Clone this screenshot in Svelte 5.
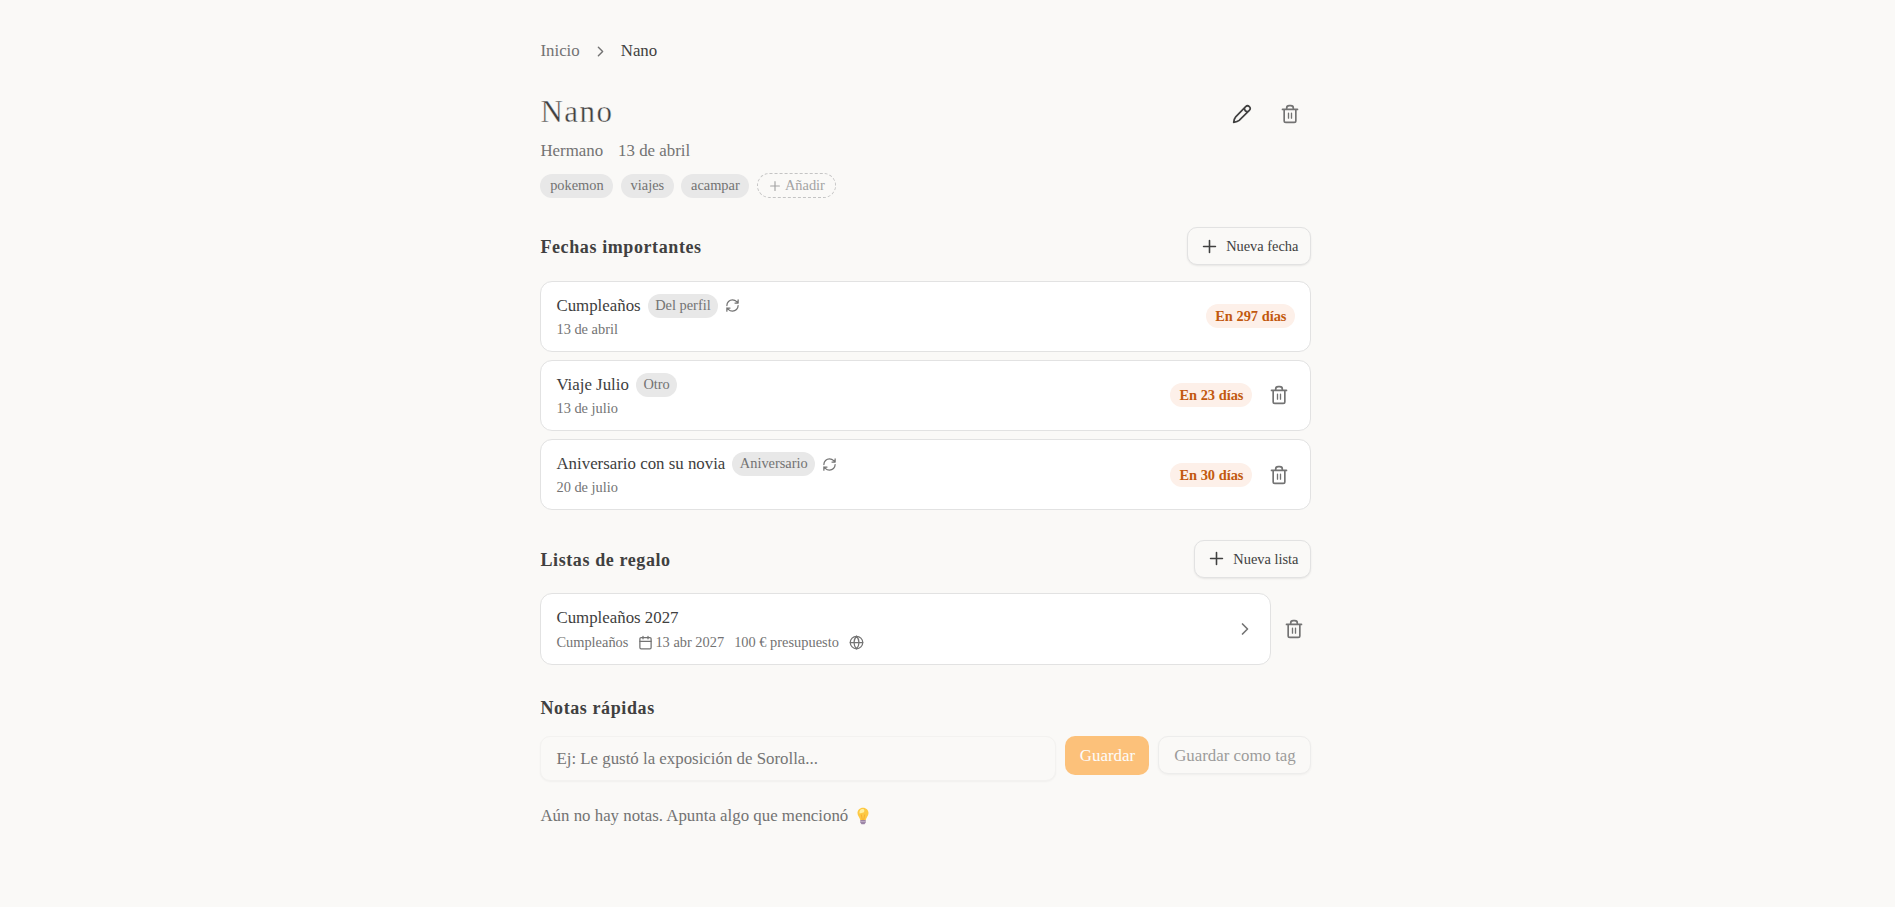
<script lang="ts">
	interface ImportantDate {
		name: string;
		kind: string;
		date: string;
		days: number;
		repeats: boolean;
		removable: boolean;
	}

	const tags = ['pokemon', 'viajes', 'acampar'];

	const dates: ImportantDate[] = [
		{
			name: 'Cumpleaños',
			kind: 'Del perfil',
			date: '13 de abril',
			days: 297,
			repeats: true,
			removable: false
		},
		{
			name: 'Viaje Julio',
			kind: 'Otro',
			date: '13 de julio',
			days: 23,
			repeats: false,
			removable: true
		},
		{
			name: 'Aniversario con su novia',
			kind: 'Aniversario',
			date: '20 de julio',
			days: 30,
			repeats: true,
			removable: true
		}
	];

	let note = $state('');
</script>

{#snippet trash()}
	<svg class="icon" viewBox="0 0 24 24" width="20" height="20">
		<path d="M3 6.5h18M19 6.5V20a2 2 0 0 1-2 2H7a2 2 0 0 1-2-2V6.5M8 6V5a3 3 0 0 1 3-3h2a3 3 0 0 1 3 3v1" />
		<path class="thin" d="M10.2 11v6M13.8 11v6" />
	</svg>
{/snippet}

{#snippet plus(size: number)}
	<svg class="icon" viewBox="0 0 24 24" width={size} height={size}>
		<path d="M4.5 12h15M12 4.5v15" />
	</svg>
{/snippet}

{#snippet chevron(size: number)}
	<svg class="icon" viewBox="0 0 24 24" width={size} height={size}>
		<path d="m9 18 6-6-6-6" />
	</svg>
{/snippet}

<main class="page">
	<nav class="breadcrumb">
		<a href="#inicio">Inicio</a>
		{@render chevron(17)}
		<span>Nano</span>
	</nav>

	<header class="profile">
		<div class="title">
			<h1>Nano</h1>
			<div class="actions">
				<button class="icon-button dark" aria-label="Editar">
					<svg class="icon" viewBox="0 0 24 24" width="20" height="20">
						<path d="M16.4 3.2a3.1 3.1 0 0 1 4.4 4.4L8.6 19.6c-1.3 1.2-4 2-6.6 2.4.4-2.6 1.2-5.3 2.4-6.6zM15 5c0 2.5 1.5 4 4 4" />
					</svg>
				</button>
				<button class="icon-button" aria-label="Eliminar">{@render trash()}</button>
			</div>
		</div>
		<p class="meta"><span>Hermano</span><span>13 de abril</span></p>
		<div class="tags">
			{#each tags as tag}
				<span class="tag">{tag}</span>
			{/each}
			<button class="tag add">{@render plus(14)}Añadir</button>
		</div>
	</header>

	<section class="dates">
		<div class="section-head">
			<h2>Fechas importantes</h2>
			<button class="outline new">{@render plus(19)}Nueva fecha</button>
		</div>
		<ul>
			{#each dates as item}
				<li class="card">
					<div class="info">
						<div class="name">
							<span>{item.name}</span>
							<span class="kind">{item.kind}</span>
							{#if item.repeats}
								<svg class="icon" viewBox="0 0 24 24" width="15" height="15">
									<path d="M3 12a9 9 0 0 1 9-9 9.75 9.75 0 0 1 6.74 2.74L21 8M21 3v5h-5M21 12a9 9 0 0 1-9 9 9.75 9.75 0 0 1-6.74-2.74L3 16M8 16H3v5" />
								</svg>
							{/if}
						</div>
						<p class="small">{item.date}</p>
					</div>
					<span class="days">En {item.days} días</span>
					{#if item.removable}
						<button class="icon-button" aria-label="Eliminar fecha">{@render trash()}</button>
					{/if}
				</li>
			{/each}
		</ul>
	</section>

	<section class="lists">
		<div class="section-head">
			<h2>Listas de regalo</h2>
			<button class="outline new">{@render plus(19)}Nueva lista</button>
		</div>
		<div class="list-row">
			<a class="card" href="#lista">
				<div class="info">
					<div class="name">Cumpleaños 2027</div>
					<div class="small details">
						<span>Cumpleaños</span>
						<span class="when">
							<svg class="icon" viewBox="0 0 24 24" width="15" height="15">
								<rect x="3" y="4" width="18" height="18" rx="2" />
								<path d="M8 2v4M16 2v4M3 10h18" />
							</svg>
							13 abr 2027
						</span>
						<span>100 € presupuesto</span>
						<svg class="icon" viewBox="0 0 24 24" width="15" height="15">
							<circle cx="12" cy="12" r="10" />
							<path d="M12 2a14.5 14.5 0 0 0 0 20 14.5 14.5 0 0 0 0-20M2 12h20" />
						</svg>
					</div>
				</div>
				{@render chevron(20)}
			</a>
			<button class="icon-button" aria-label="Eliminar lista">{@render trash()}</button>
		</div>
	</section>

	<section class="notes">
		<h2>Notas rápidas</h2>
		<form>
			<input bind:value={note} placeholder="Ej: Le gustó la exposición de Sorolla..." />
			<button class="primary" disabled={!note}>Guardar</button>
			<button class="outline" disabled={!note}>Guardar como tag</button>
		</form>
		<p class="empty">
			Aún no hay notas. Apunta algo que mencionó
			<svg class="bulb" viewBox="0 0 12 18" width="12" height="18">
				<path d="M6 .7C2.8.7.5 3 .5 6c0 3 2.2 4.2 2.8 7.2h5.4C9.3 10.2 11.5 9 11.5 6c0-3-2.3-5.3-5.5-5.3z" fill="#fdc943" />
				<path d="M2.5 6.5C2 4 3.5 2 5.5 2 7.5 2 8 4 6.5 5.5z" fill="#fff0a0" />
				<path d="M4.3 7.5 5.3 13M7.7 7.5 6.7 13" stroke="#f6a52c" stroke-width=".7" />
				<path d="M3.3 13h5.4v2.5L7.5 17.3h-3l-1.2-1.8z" fill="#9a83a5" />
				<path d="M3.3 14.6h5.4" stroke="#c6b5cc" stroke-width=".8" />
			</svg>
		</p>
	</section>
</main>

<style>
	:global(body) {
		background: #faf9f7;
	}

	.page {
		width: 771px;
		margin-left: 540.45px;
		padding-top: 39px;
		font-family: 'Liberation Serif', 'Times New Roman', serif;
		font-size: 16.85px;
		line-height: 24px;
		color: #404040;
	}

	.page *,
	.page {
		box-sizing: border-box;
	}

	h1,
	h2,
	p,
	ul {
		margin: 0;
		padding: 0;
	}

	button,
	input {
		font: inherit;
		color: inherit;
	}

	a {
		color: inherit;
		text-decoration: none;
	}

	.icon {
		display: block;
		flex: none;
		fill: none;
		stroke: currentColor;
		stroke-width: 2;
		stroke-linecap: round;
		stroke-linejoin: round;
	}

	.thin {
		stroke-width: 1.6;
	}

	.breadcrumb {
		display: flex;
		align-items: center;
		gap: 12px;
		height: 24px;
		color: #737373;
	}

	.breadcrumb span {
		color: #404040;
	}

	.title {
		display: flex;
		align-items: center;
		justify-content: space-between;
		height: 43px;
		margin-top: 29px;
	}

	h1 {
		padding-bottom: 4px;
		font-size: 31px;
		font-weight: 300;
		line-height: 38px;
		letter-spacing: 1.5px;
		-webkit-text-stroke: 0.4px #faf9f7;
	}

	.actions {
		display: flex;
		gap: 5px;
	}

	.icon-button {
		display: flex;
		align-items: center;
		justify-content: center;
		width: 43px;
		height: 43px;
		padding: 0;
		border: 0;
		background: none;
		color: #737373;
	}

	.dark {
		color: #404040;
	}

	.meta {
		display: flex;
		gap: 15px;
		margin-top: 3.5px;
		color: #737373;
	}

	.tags {
		display: flex;
		align-items: center;
		gap: 7.5px;
		height: 25px;
		margin-top: 10.5px;
	}

	.tag {
		height: 24px;
		padding: 0 9.7px;
		border-radius: 12px;
		background: #e8e8e8;
		color: #737373;
		font-size: 14.4px;
		line-height: 23px;
	}

	.add {
		display: flex;
		align-items: center;
		gap: 3px;
		height: 25px;
		padding: 0 10px;
		border: 1px dashed #c4c4c4;
		border-radius: 13px;
		background: none;
		color: #a3a3a3;
	}

	.section-head {
		display: flex;
		align-items: center;
		justify-content: space-between;
		height: 38px;
	}

	h2 {
		padding-top: 2px;
		font-size: 18px;
		font-weight: 700;
		line-height: 26px;
		letter-spacing: 0.6px;
	}

	.outline {
		display: flex;
		align-items: center;
		justify-content: center;
		height: 38px;
		border: 1px solid #e2e2e2;
		border-radius: 10px;
		background: #faf9f7;
		box-shadow: 0 1px 2px rgb(0 0 0 / 8%);
	}

	.new {
		gap: 7px;
		padding: 0 12px;
		font-size: 14.4px;
	}

	.dates {
		margin-top: 29px;
	}

	.dates ul {
		display: flex;
		flex-direction: column;
		gap: 8px;
		margin-top: 15.5px;
		list-style: none;
	}

	.card {
		display: flex;
		align-items: center;
		height: 71.3px;
		padding: 0 15px;
		border: 1px solid #e2e2e2;
		border-radius: 12px;
		background: #fff;
	}

	.info {
		flex: 1;
		padding-top: 2px;
	}

	.name {
		display: flex;
		align-items: center;
		gap: 7px;
		height: 24px;
	}

	.name .icon {
		color: #737373;
	}

	.kind {
		height: 24px;
		padding: 0 7.5px;
		border-radius: 12px;
		background: #e8e8e8;
		color: #737373;
		font-size: 14.4px;
		line-height: 23px;
	}

	.small {
		font-size: 14.4px;
		line-height: 23px;
		color: #737373;
	}

	.days {
		height: 24px;
		padding: 0 9px;
		border-radius: 12px;
		background: #fdf0e9;
		color: #c2590f;
		font-size: 14.4px;
		font-weight: 700;
	}

	.card .icon-button {
		margin: 0 -5px 0 5px;
	}

	.lists {
		margin-top: 29.5px;
	}

	.list-row {
		display: flex;
		align-items: center;
		justify-content: space-between;
		margin-top: 15.5px;
	}

	.list-row .card {
		width: 731px;
	}

	.list-row > .icon-button {
		width: 34px;
	}

	.card > .icon {
		color: #737373;
	}

	.details {
		display: flex;
		align-items: center;
		gap: 10px;
		height: 25px;
	}

	.when {
		display: flex;
		align-items: center;
		gap: 2px;
	}

	.notes {
		margin-top: 28.5px;
	}

	.notes form {
		display: flex;
		align-items: flex-start;
		gap: 9px;
		margin-top: 15px;
	}

	input {
		flex: 1;
		min-width: 0;
		height: 45px;
		padding: 1px 15px 0;
		border: 1px solid #f3f2f0;
		border-radius: 10px;
		background: #faf9f7;
		box-shadow: 0 1px 2px rgb(0 0 0 / 4%);
	}

	input::placeholder {
		color: #757575;
		opacity: 1;
	}

	.primary {
		width: 84px;
		height: 38.5px;
		padding: 1px 0 0;
		border: 0;
		border-radius: 10px;
		background: #ff8b00;
		color: #fff;
	}

	.notes .outline {
		width: 153px;
		padding: 1px 0 0;
	}

	.notes button:disabled {
		opacity: 0.5;
	}

	.empty {
		display: flex;
		align-items: center;
		gap: 9px;
		margin-top: 23px;
		color: #737373;
	}
</style>
